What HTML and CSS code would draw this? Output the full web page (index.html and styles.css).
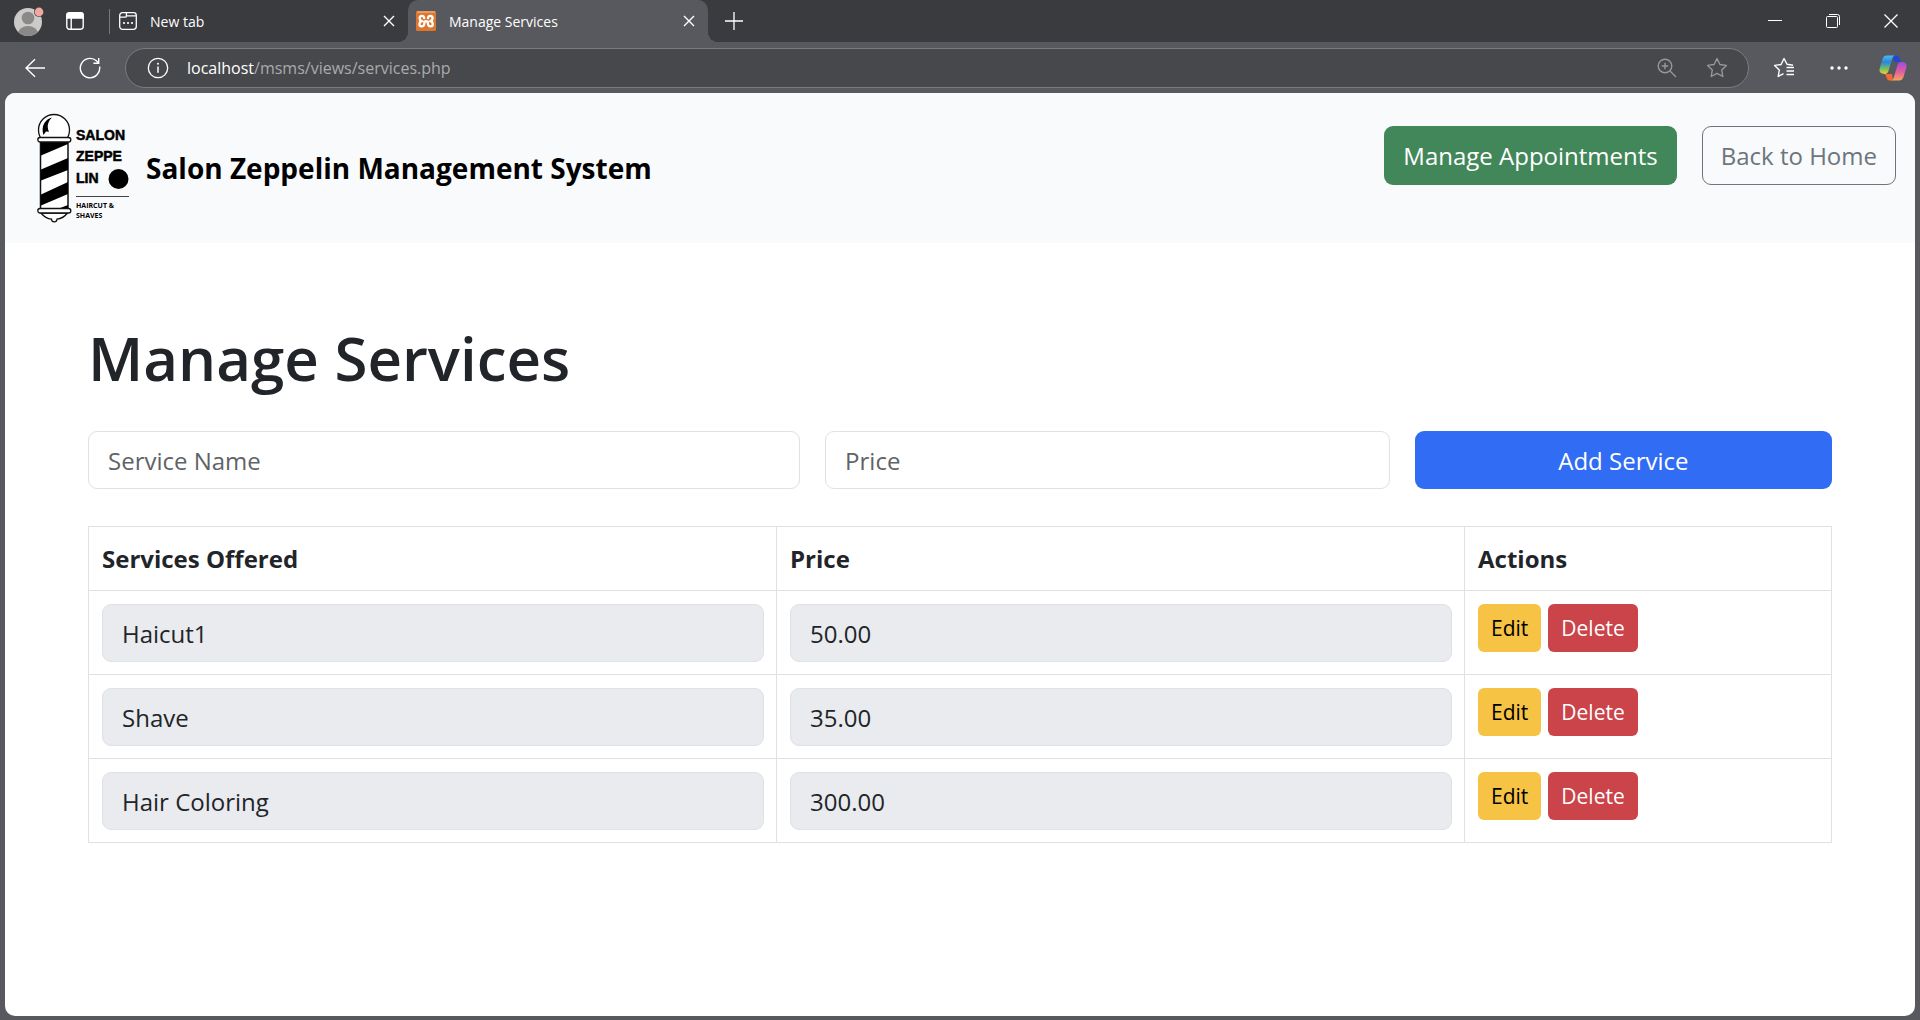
FILE: index.html
```html
<!DOCTYPE html>
<html lang="en">
<head>
<meta charset="utf-8">
<title>Manage Services</title>
<link rel="stylesheet" href="styles.css">
</head>
<body>
<div class="browser">
  <div class="tabbar">
    <button class="icon-btn profile" aria-label="Profile">
      <svg width="32" height="32" viewBox="0 0 32 32">
        <defs><clipPath id="face"><circle cx="15" cy="17" r="14"/></clipPath></defs>
        <circle cx="15" cy="17" r="14" fill="#cdcbc9"/>
        <g clip-path="url(#face)" fill="#8b8987"><circle cx="15" cy="13" r="6.3"/><ellipse cx="15" cy="29" rx="10" ry="8"/></g>
        <circle cx="26" cy="7" r="5" fill="#3a3b3e"/><circle cx="26" cy="7" r="4.4" fill="#f0a8a0"/>
      </svg>
    </button>
    <button class="icon-btn workspace" aria-label="Tab actions">
      <svg width="18" height="18" viewBox="0 0 18 18" fill="none" stroke="#fff" stroke-width="1.4"><rect x=".8" y=".8" width="16.4" height="16.4" rx="2.6"/><path d="M1 2.6Q1 1 3 1h12q2 0 2 2v3H1z" fill="#fff"/><path d="M5.2 6v11"/></svg>
    </button>
    <span class="divider"></span>
    <div class="tab">
      <svg width="18" height="18" viewBox="0 0 18 18" fill="none" stroke="#fff" stroke-width="1.3"><rect x=".7" y=".7" width="16.6" height="16.6" rx="2.8"/><path d="M1 5.2h5.2q1.200 0 1.200-1.200V1M7.400 3.800h9.500"/><g fill="#fff" stroke="none"><circle cx="5" cy="11" r="1.100"/><circle cx="9" cy="11" r="1.100"/><circle cx="13" cy="11" r="1.100"/></g></svg>
      <span class="tab-title">New tab</span>
      <button class="icon-btn close" aria-label="Close New tab"><svg width="12" height="12" viewBox="0 0 12 12" stroke="#fff" stroke-width="1.400"><path d="M1 1l10 10M11 1L1 11"/></svg></button>
    </div>
    <div class="tab active">
      <svg width="20" height="20" viewBox="0 0 20 20"><rect width="20" height="20" rx="1.500" fill="#df762e"/><path d="M1 1h18" stroke="#f0b48c" stroke-width="1.200"/><path d="M8.200 7.200C8.200 3.800 3.600 4.200 3.600 7.200c0 1.600 1 2.400 2 2.900-1.500.6-2.200 1.600-2.200 2.900 0 3.200 4.600 3.200 4.800 0 .1-1.800.7-2.900 1.900-2.900s1.800 1.100 1.900 2.900c.2 3.200 4.800 3.200 4.800 0 0-1.300-.7-2.300-2.200-2.900 1-.5 2-1.300 2-2.900 0-3-4.600-3.400-4.600 0" fill="none" stroke="#fff" stroke-width="2.300" stroke-linecap="round"/></svg>
      <span class="tab-title">Manage Services</span>
      <button class="icon-btn close" aria-label="Close Manage Services"><svg width="12" height="12" viewBox="0 0 12 12" stroke="#fff" stroke-width="1.400"><path d="M1 1l10 10M11 1L1 11"/></svg></button>
    </div>
    <button class="icon-btn newtab" aria-label="New tab"><svg width="18" height="18" viewBox="0 0 18 18" stroke="#fff" stroke-width="1.300"><path d="M9 0v18M0 9h18"/></svg></button>
    <div class="window-controls">
      <button class="icon-btn" aria-label="Minimize"><svg width="14" height="14" viewBox="0 0 14 14"><path d="M0 6.500h14" stroke="#fff"/></svg></button>
      <button class="icon-btn" aria-label="Restore"><svg width="14" height="14" viewBox="0 0 14 14" fill="none" stroke="#fff"><rect x=".5" y="2.500" width="11" height="11" rx="1"/><path d="M3 .5h8.500a2 2 0 0 1 2 2V11"/></svg></button>
      <button class="icon-btn" aria-label="Close window"><svg width="14" height="14" viewBox="0 0 14 14" stroke="#fff" stroke-width="1.300"><path d="M.5.5l13 13M13.500.5l-13 13"/></svg></button>
    </div>
  </div>

  <div class="toolbar">
    <button class="icon-btn back" aria-label="Back"><svg width="20" height="20" viewBox="0 0 20 20" fill="none" stroke="#fff" stroke-width="1.400"><path d="M20 10H1M10 1.200L1 10l9 8.800"/></svg></button>
    <button class="icon-btn reload" aria-label="Refresh"><svg width="22" height="22" viewBox="0 0 22 22" fill="none" stroke="#fff" stroke-width="1.400"><path d="M20.600 9.500a9.700 9.700 0 1 1-3.200-5.700L19.500 6M19.700 1v5.300h-5.300"/></svg></button>
    <div class="address">
      <svg width="22" height="22" viewBox="0 0 22 22" fill="none" stroke="#fff" stroke-width="1.300"><circle cx="11" cy="11" r="9.700"/><path d="M11 9.500v6.300" stroke-width="1.500"/><circle cx="11" cy="6.700" r="1" fill="#fff" stroke="none"/></svg>
      <span class="url"><span class="host">localhost</span>/msms/views/services.php</span>
      <button class="icon-btn" aria-label="Zoom"><svg width="20" height="20" viewBox="0 0 20 20" fill="none" stroke="#97989a" stroke-width="1.400"><circle cx="8" cy="8" r="6.800"/><path d="M13 13l6 6M8 4.700v6.600M4.700 8h6.600"/></svg></button>
      <button class="icon-btn favorite" aria-label="Add to favorites"><svg width="22" height="22" viewBox="0 0 22 22" fill="none" stroke="#97989a" stroke-width="1.400" stroke-linejoin="round"><path d="M11 1.500l2.900 6 6.500.9-4.700 4.600 1.100 6.500L11 16.400l-5.800 3.100 1.100-6.500L1.600 8.400l6.500-.9z"/></svg></button>
    </div>
    <button class="icon-btn favorites" aria-label="Favorites"><svg width="22" height="22" viewBox="0 0 22 22" fill="none" stroke="#fff" stroke-width="1.400" stroke-linejoin="round"><path d="M20 8.200l-6-.9-3-5.800-2.900 6-6.500.9L6.300 13l-1.100 6.500L10.500 16.700M13.500 10.500H21M13.500 14H21M13.500 17.500H21"/></svg></button>
    <button class="icon-btn more" aria-label="Settings and more"><svg width="18" height="6" viewBox="0 0 18 6" fill="#fff"><circle cx="2" cy="3" r="1.700"/><circle cx="9" cy="3" r="1.700"/><circle cx="16" cy="3" r="1.700"/></svg></button>
    <button class="icon-btn copilot" aria-label="Copilot">
      <svg width="28" height="28" viewBox="0 0 28 28">
        <defs>
          <linearGradient id="cool" x1="0" y1="0" x2="0" y2="1"><stop offset="0" stop-color="#4bbcf5"/><stop offset=".35" stop-color="#2b86dd"/><stop offset=".7" stop-color="#6fbd6a"/><stop offset="1" stop-color="#f3d12e"/></linearGradient>
          <linearGradient id="warm" x1="0" y1="0" x2="0" y2="1"><stop offset="0" stop-color="#9a4fe8"/><stop offset=".5" stop-color="#e25aa0"/><stop offset="1" stop-color="#f6a55c"/></linearGradient>
        </defs>
        <path d="M14 1.500h3c3 0 3 2 4 4.500.5 1.500 1.300 2 3 2h-9z" fill="#2147d8"/>
        <path d="M14 26.500h-3c-3 0-3-2-4-4.500-.5-1.500-1.300-2-3-2h9z" fill="#ef6a35"/>
        <path d="M8 1.500h8.500c-2 0-2.800 1.500-3.400 3.500L9.600 16.500C9 18.700 8 20 5.500 20 1 20-.2 17.500.8 14L3.500 5C4.300 2.500 5.800 1.500 8 1.500z" fill="url(#cool)"/>
        <path d="M20 26.500h-8.500c2 0 2.800-1.500 3.400-3.500l3.500-11.500C19 9.300 20 8 22.500 8c4.500 0 5.700 2.500 4.700 6l-2.700 9c-.8 2.500-2.300 3.500-4.500 3.500z" fill="url(#warm)"/>
      </svg>
    </button>
  </div>

  <div class="page">
    <header class="navbar">
      <a class="brand" href="#">
        <svg class="logo" width="92" height="110" viewBox="0 0 92 110" role="img" aria-label="Salon Zeppelin Haircut and Shaves">
          <defs><clipPath id="pole"><rect x="4" y="29" width="27" height="67"/></clipPath></defs>
          <circle cx="17" cy="17" r="15.500" fill="#fff" stroke="#111" stroke-width="1.300"/>
          <path d="M15 4.500C7 7 4 13.500 6.500 22l2.500-3.500 3 .3C9.500 13 11 8.500 15 4.500z"/>
          <rect x="3.500" y="28" width="27.500" height="69" fill="#fff" stroke="#111" stroke-width="1.500"/>
          <g clip-path="url(#pole)"><path d="M3 26h28v5L3 43zM3 57l28-12v12L3 68zM3 82l28-13v12L3 93zM18 97l13-5v6H18z"/></g>
          <rect x=".8" y="24.500" width="33" height="4.500" rx="2.200" fill="#fff" stroke="#111" stroke-width="1.300"/>
          <path d="M4 100c4 5 8 6 10.500 6.200.3 3.500 5.200 3.500 5.500 0 3-.4 7-1.700 10.500-6.200z" fill="#fff" stroke="#111" stroke-width="1.300"/>
          <rect x=".8" y="95.500" width="33" height="4.500" rx="2.200" fill="#fff" stroke="#111" stroke-width="1.300"/>
          <g class="logo-name"><text x="39" y="27">SALON</text><text x="39" y="48">ZEPPE</text><text x="39" y="70">LIN</text></g>
          <circle cx="81.500" cy="66" r="10"/>
          <path d="M39 83.500h53" stroke="#444" stroke-width="1.200"/>
          <g class="logo-tag"><text x="39" y="95">HAIRCUT &amp;</text><text x="39" y="105">SHAVES</text></g>
        </svg>
        <span>Salon Zeppelin Management System</span>
      </a>
      <nav class="nav-actions">
        <a class="btn btn-success" href="#">Manage Appointments</a>
        <a class="btn btn-outline" href="#">Back to Home</a>
      </nav>
    </header>

    <main class="content">
      <h1>Manage Services</h1>
      <form class="add-form">
        <input class="field name-field" type="text" placeholder="Service Name" aria-label="Service Name">
        <input class="field price-field" type="text" placeholder="Price" aria-label="Price">
        <button class="btn btn-primary" type="button">Add Service</button>
      </form>
      <table class="services">
        <colgroup><col class="col-name"><col class="col-price"><col class="col-actions"></colgroup>
        <thead><tr><th>Services Offered</th><th>Price</th><th>Actions</th></tr></thead>
        <tbody>
          <tr><td><input class="field" readonly value="Haicut1" aria-label="Service 1 name"></td><td><input class="field" readonly value="50.00" aria-label="Service 1 price"></td><td><div class="actions"><button class="btn-sm edit">Edit</button><button class="btn-sm delete">Delete</button></div></td></tr>
          <tr><td><input class="field" readonly value="Shave" aria-label="Service 2 name"></td><td><input class="field" readonly value="35.00" aria-label="Service 2 price"></td><td><div class="actions"><button class="btn-sm edit">Edit</button><button class="btn-sm delete">Delete</button></div></td></tr>
          <tr><td><input class="field" readonly value="Hair Coloring" aria-label="Service 3 name"></td><td><input class="field" readonly value="300.00" aria-label="Service 3 price"></td><td><div class="actions"><button class="btn-sm edit">Edit</button><button class="btn-sm delete">Delete</button></div></td></tr>
        </tbody>
      </table>
    </main>
  </div>
</div>
</body>
</html>
```
FILE: styles.css
```css
* { box-sizing: border-box; }

body {
  margin: 0;
  font-family: "Open Sans", "Noto Sans", sans-serif;
  font-size: 24px;
  color: #212529;
}

button, input { font: inherit; }
svg { display: block; flex: none; }

.browser {
  min-height: 100vh;
  display: flex;
  flex-direction: column;
  background: #58595e;
}

.icon-btn {
  display: flex;
  padding: 0;
  border: 0;
  background: none;
}

/* Tab strip */
.tabbar {
  display: flex;
  align-items: center;
  height: 42px;
  padding-left: 13px;
  background: #3a3b3e;
}
.workspace { margin-left: 21px; }
.divider { width: 1px; height: 25px; margin-left: 25px; background: #77787b; }

.tab {
  position: relative;
  display: flex;
  align-items: center;
  gap: 13px;
  width: 298px;
  height: 42px;
  padding: 0 13px 0 9px;
  color: #fff;
  font-size: 14px;
}
.tab-title { flex: 1; }
.tab.active { width: 300px; padding-left: 8px; background: #58595e; border-radius: 10px 10px 0 0; }
.tab.active::before, .tab.active::after {
  content: "";
  position: absolute;
  bottom: 0;
  width: 10px;
  height: 10px;
}
.tab.active::before { left: -10px; background: radial-gradient(circle at 0 0, #3a3b3e 10px, #58595e 10px); }
.tab.active::after { right: -10px; background: radial-gradient(circle at 100% 0, #3a3b3e 10px, #58595e 10px); }
.newtab { margin-left: 17px; }
.window-controls { display: flex; gap: 44px; margin-left: auto; padding-right: 22px; }

/* Toolbar */
.toolbar {
  display: flex;
  align-items: center;
  height: 51px;
  padding: 0 13px 0 25px;
}
.reload { margin-left: 34px; }
.address {
  flex: 1;
  display: flex;
  align-items: center;
  height: 40px;
  margin-left: 24px;
  padding: 0 20px 0 21px;
  border: 1px solid #7b7c7f;
  border-radius: 20px;
  background: #47484b;
}
.url { flex: 1; margin-left: 18px; font-size: 16px; color: #a9aaac; }
.host { color: #fff; }
.favorite { margin-left: 29px; }
.favorites { margin-left: 24px; }
.more { margin-left: 35px; }
.copilot { margin-left: 31px; }

/* Page */
.page {
  flex: 1;
  margin: 0 5px 4px;
  overflow: hidden;
  border-radius: 10px;
  background: #fff;
}
.navbar {
  display: flex;
  justify-content: space-between;
  align-items: flex-start;
  padding: 20px 19px 20px 32px;
  background: #f8fafc;
}
.brand {
  display: flex;
  align-items: center;
  gap: 17px;
  color: #000;
  font-size: 28px;
  font-weight: 700;
  text-decoration: none;
}
.logo-name { font: 700 14px "Liberation Sans", sans-serif; stroke: #000; stroke-width: .5px; }
.logo-tag { font: 700 7px "Open Sans", sans-serif; }
.nav-actions { display: flex; gap: 25px; margin-top: 13px; }

.btn {
  padding: 10px 18px 9px;
  border: 1px solid transparent;
  border-radius: 9px;
  line-height: 38px;
  text-align: center;
  text-decoration: none;
  white-space: nowrap;
}
.btn-success { background: #428759; color: #fff; }
.btn-outline { border-color: #6c757d; color: #6c757d; }
.btn-primary { grid-column: span 3; padding-bottom: 8px; background: #316cf4; color: #fff; }

.content { padding: 71px 83px; }
h1 { margin: 0 0 29px; font-size: 60px; font-weight: 600; line-height: 88px; }

.add-form {
  display: grid;
  grid-template-columns: repeat(12, minmax(0, 1fr));
  gap: 25px;
}
.field {
  display: block;
  width: 100%;
  height: 58px;
  padding: 0 19px;
  border: 1px solid #dee2e6;
  border-radius: 9px;
  background: #fff;
  color: #212529;
}
.field::placeholder { color: #5f6367; opacity: 1; }
.field[readonly] { background: #e9ebee; }
.name-field { grid-column: span 5; }
.price-field { grid-column: span 4; }

.services {
  width: 100%;
  margin-top: 37px;
  border-collapse: collapse;
  table-layout: fixed;
}
.col-actions { width: 367px; }
.services th, .services td {
  padding: 13px 12px 12px 13px;
  border: 1px solid #dee2e6;
  text-align: left;
  vertical-align: top;
}
.services th { line-height: 38px; font-weight: 700; }
.actions { display: flex; gap: 7px; }
.btn-sm {
  height: 48px;
  padding: 0 13px;
  border: 0;
  border-radius: 6px;
  font-size: 21px;
}
.edit { background: #f6c344; color: #000; }
.delete { background: #ca444a; color: #fff; }
```
